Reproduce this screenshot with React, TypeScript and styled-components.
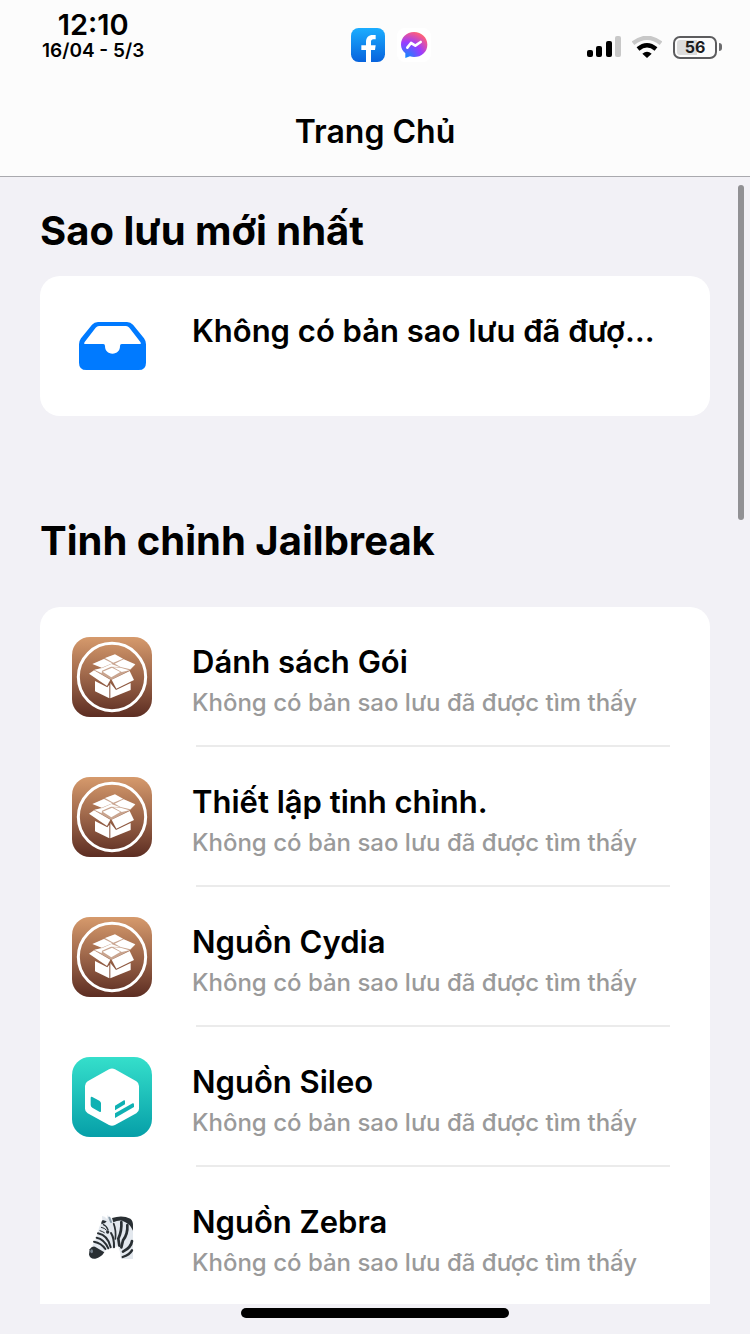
import React from "react";
import styled, { createGlobalStyle } from "styled-components";

const GlobalStyle = createGlobalStyle`
  *, *::before, *::after { box-sizing: border-box; }
  body {
    margin: 0;
    background: #f2f1f6;
    color: #000;
    font-family: Inter, "Liberation Sans", sans-serif;
  }
  h1, h2, h3, p, ul { margin: 0; padding: 0; }
`;

const Screen = styled.div`
  display: flex;
  flex-direction: column;
  height: 100vh;
  overflow: hidden;
`;

const Header = styled.header`
  flex: none;
  background: #fcfcfc;
  border-bottom: 1px solid #a9a9ae;
`;

const StatusBar = styled.div`
  display: grid;
  grid-template-columns: 1fr auto 1fr;
  align-items: center;
  height: 88px;
  padding: 0 28px 16px 42px;
`;

const Clock = styled.div`
  justify-self: start;
  display: flex;
  flex-direction: column;
  align-items: center;
`;

const Time = styled.time`
  font-size: 29px;
  line-height: 30px;
  font-weight: 600;
`;

const DateLine = styled.span`
  font-size: 19px;
  line-height: 22px;
  font-weight: 600;
`;

const AppBadges = styled.div`
  display: flex;
  align-items: center;
  gap: 12px;
  padding: 18px 0 0 18px;
`;

const Indicators = styled.div`
  justify-self: end;
  display: flex;
  align-items: center;
  gap: 11px;
  padding-top: 22px;
`;

const BatteryBox = styled.div`
  display: flex;
  align-items: center;
  gap: 2px;
`;

const BatteryShell = styled.div`
  display: flex;
  width: 44px;
  height: 23px;
  padding: 2px;
  border: 2px solid #5c5c5e;
  border-radius: 7px;
`;

const BatteryLevel = styled.div<{ $level: number }>`
  flex: 1;
  border-radius: 3px;
  background: linear-gradient(to right, #dcdcdc ${(p) => p.$level}%, transparent ${(p) => p.$level}%);
  color: #1c1c1e;
  font-size: 16px;
  line-height: 15px;
  font-weight: 700;
  text-align: center;
`;

const BatteryCap = styled.div`
  width: 3px;
  height: 8px;
  border-radius: 0 4px 4px 0;
  background: #6c6c6e;
`;

const PageTitle = styled.h1`
  height: 88px;
  font-size: 32px;
  line-height: 88px;
  font-weight: 600;
  text-align: center;
`;

const Content = styled.main`
  position: relative;
  flex: 1;
  min-height: 0;
  overflow: hidden;
  padding: 24px 40px 0;
`;

const SectionTitle = styled.h2<{ $gap: number }>`
  font-size: 40px;
  line-height: 60px;
  font-weight: 700;
  margin-bottom: ${(p) => p.$gap}px;
`;

const Card = styled.ul<{ $open?: boolean }>`
  list-style: none;
  background: #fff;
  border-radius: ${(p) => (p.$open ? "20px 20px 0 0" : "20px")};
`;

const BackupCard = styled(Card)`
  margin-bottom: 95px;
`;

const Item = styled.li`
  display: flow-root;
  height: 140px;
  & + &::before {
    content: "";
    display: block;
    height: 2px;
    margin: -2px 40px 0 156px;
    background: #ebebeb;
  }
`;

const Row = styled.a`
  display: grid;
  grid-template-columns: 80px minmax(0, 1fr);
  column-gap: 40px;
  height: 140px;
  padding: 0 40px 0 32px;
  color: inherit;
  text-decoration: none;
`;

const IconSlot = styled.span`
  display: grid;
  place-items: center;
`;

const RowText = styled.div`
  padding-top: 35px;
`;

const RowTitle = styled.h3`
  overflow: hidden;
  text-overflow: ellipsis;
  white-space: nowrap;
  font-size: 31px;
  line-height: 40px;
  font-weight: 600;
`;

const RowDetail = styled.p`
  padding-top: 5px;
  color: #9a9a9a;
  font-size: 24px;
  line-height: 32px;
  font-weight: 500;
  white-space: nowrap;
`;

const ScrollThumb = styled.div`
  position: absolute;
  top: 8px;
  right: 6px;
  width: 6px;
  height: 335px;
  border-radius: 3px;
  background: #919194;
`;

const HomeArea = styled.footer`
  flex: none;
  height: 30px;
  padding-top: 4px;
`;

const HomeIndicator = styled.div`
  width: 268px;
  height: 10px;
  margin: 0 auto;
  border-radius: 5px;
  background: #000;
`;

const FacebookIcon = () => (
  <svg width="34" height="34" viewBox="0 0 102 102" aria-label="Facebook">
    <defs>
      <linearGradient id="fb" x1="0" y1="0" x2="0" y2="1">
        <stop offset="0" stopColor="#1badff" />
        <stop offset="1" stopColor="#0763dd" />
      </linearGradient>
    </defs>
    <rect width="102" height="102" rx="23" fill="url(#fb)" />
    <path d="M45 102V66H31V52H45V42C45 28 53 21 65 21H74V34H68C62 34 60 37 60 42V52H74L72 66H60V102Z" fill="#fff" />
  </svg>
);

const MessengerIcon = () => (
  <svg width="34" height="34" viewBox="0 0 102 102" aria-label="Messenger">
    <defs>
      <radialGradient id="ms" cx="0.2" cy="1" r="1.1">
        <stop offset="0" stopColor="#0a8dff" />
        <stop offset="0.55" stopColor="#9a3cff" />
        <stop offset="0.9" stopColor="#f2588f" />
        <stop offset="1" stopColor="#ff6a6a" />
      </radialGradient>
    </defs>
    <rect width="102" height="102" rx="23" fill="#fff" />
    <path d="M51 12C28 12 12 29 12 50C12 61 17 69 25 76V90L39 85C43 86 47 87 51 87C74 87 91 71 91 50C91 29 74 12 51 12Z" fill="url(#ms)" />
    <path d="M31 59L42 45L55 53L71 42" fill="none" stroke="#fff" strokeWidth="8" strokeLinecap="round" strokeLinejoin="round" />
  </svg>
);

const SignalIcon = () => (
  <svg width="34" height="22" viewBox="0 0 34 22" aria-label="Signal">
    <rect x="0" y="14" width="6" height="7" rx="2" />
    <rect x="9" y="10" width="6" height="11" rx="2" />
    <rect x="19" y="5" width="6" height="16" rx="2" />
    <rect x="28" y="0" width="6" height="21" rx="2" fill="#c8c8c8" />
  </svg>
);

const WifiIcon = () => (
  <svg width="30" height="22" viewBox="0 0 90 66" aria-label="Wi-Fi">
    <path d="M3 22Q45 -11 87 22" fill="none" stroke="#c8c8c8" strokeWidth="13" />
    <path d="M18 39Q45 16 72 39" fill="none" stroke="#000" strokeWidth="13" />
    <path d="M31 53Q45 41 59 53L45 66Z" />
  </svg>
);

const InboxIcon = () => (
  <svg width="67" height="48" viewBox="147 171 201 144" aria-hidden="true">
    <path
      fillRule="evenodd"
      fill="#007aff"
      d="M204 171H291Q302 171 309 179L342 220Q348 228 348 238V293Q348 315 326 315H169Q147 315 147 293V238Q147 228 153 220L186 179Q193 171 204 171ZM207 183Q201 183 197 188L164 231Q160 237 166 237H220Q225 237 225 243C225 257 234 266 247.500 266C261 266 270 257 270 243Q270 237 275 237H329Q335 237 331 231L298 188Q294 183 288 183Z"
    />
  </svg>
);

const CydiaIcon = ({ id }: { id: string }) => (
  <svg width="80" height="80" viewBox="30 30 240 240" aria-hidden="true">
    <defs>
      <linearGradient id={id} x1="0" y1="0" x2="0" y2="1">
        <stop offset="0" stopColor="#d69a6c" />
        <stop offset="0.5" stopColor="#9c6549" />
        <stop offset="1" stopColor="#5c2d22" />
      </linearGradient>
    </defs>
    <rect x="30" y="30" width="240" height="240" rx="54" fill={`url(#${id})`} />
    <circle cx="150" cy="150" r="101" fill="none" stroke="#fff" strokeWidth="9" />
    <path d="M95 110L128 94L158 83L219 114L204 130L148 158L97 130L120 122Z" fill="#c9a590" />
    <g fill="#fff">
      <path d="M129 93L159 82L183 95L154 107Z" />
      <path d="M91 111L126 96L151 109L119 122Z" />
      <path d="M158 110L185 97L220 112L205 127L176 120Z" />
      <path d="M97 128L121 123L148 111L173 120L147 119L120 131L119 139Z" />
      <path d="M122 134L150 122L175 135L148 151Z" />
      <path d="M154 121L176 122L202 130L179 135Z" />
      <path d="M81 140L96 130L145 158L135 177Z" />
      <path d="M149 158L203 132L216 159L163 185Z" />
      <path d="M99 162L136 181L142 173V214L99 193Z" />
      <path d="M145 168L162 189L206 168V189L145 214Z" />
    </g>
  </svg>
);

const SileoIcon = () => (
  <svg width="80" height="80" viewBox="30 30 240 240" aria-hidden="true">
    <defs>
      <linearGradient id="sileo" x1="0" y1="0" x2="0" y2="1">
        <stop offset="0" stopColor="#35dfcb" />
        <stop offset="1" stopColor="#069fa8" />
      </linearGradient>
    </defs>
    <rect x="30" y="30" width="240" height="240" rx="54" fill="url(#sileo)" />
    <path d="M141 67Q150 62 159 67L223 103Q231 108 231 117V185Q231 194 223 199L159 234Q150 239 141 234L77 199Q69 194 69 185V117Q69 108 77 103Z" fill="#fff" />
    <g fill="#0fb1b3">
      <path d="M86 153Q86 148 91 150L112 161Q117 164 117 169V192Q117 197 112 194L91 182Q86 179 86 174Z" />
      <path d="M159 176L186 160Q189 159 189 163V172L159 190Z" />
      <path d="M159 199L212 169Q216 168 216 173V180L159 213Z" />
    </g>
  </svg>
);

const ZebraIcon = () => (
  <svg width="80" height="80" viewBox="0 0 240 240" aria-hidden="true">
    <path d="M91 71L90 57L98 59L106 67L106 54L118 64L124 71L145 66Q168 65 183 84V186H147Q146 164 138 148L124 154L112 154L102 160L80 180L61 185Q49 178 51 164L62 145L74 120L82 89Z" fill="#e3e8ee" />
    <g fill="#292f33">
      <path d="M53 157Q59 147 69 149L97 166Q88 181 70 185Q55 187 51 173Z" />
      <path d="M120 63Q151 53 175 65Q184 71 183 89V101Q174 79 151 71Q137 69 124 76Z" />
      <path d="M92 69L104 73L99 78L88 82Q86 75 92 69Z" />
    </g>
    <path d="M112 62L117 75" stroke="#8899a6" strokeWidth="6" strokeLinecap="round" />
    <g fill="none" stroke="#292f33" strokeWidth="6" strokeLinecap="round">
      <path d="M74 122Q96 126 109 154" />
      <path d="M66 134Q88 138 100 156" />
      <path d="M78 109Q108 115 116 151" />
      <path d="M84 101Q91 103 97 107" strokeWidth="3" />
      <path d="M88 91Q98 93 103 99" strokeWidth="3" />
      <path d="M94 83Q103 86 108 98" strokeWidth="4" />
      <path d="M117 108Q127 124 126 151" />
      <path d="M125 80Q133 101 130 126" strokeWidth="5" />
      <path d="M148 75Q150 101 139 125L142 146" strokeWidth="8" />
      <path d="M166 84Q168 111 153 130L148 151" strokeWidth="8" />
      <path d="M180 132Q178 151 153 164" strokeWidth="8" />
      <path d="M180 160Q173 173 152 180" strokeWidth="7" />
    </g>
    <circle cx="107" cy="105" r="5" fill="#292f33" />
    <ellipse cx="59" cy="163" rx="4" ry="6" fill="#77838f" />
  </svg>
);

const NOT_FOUND = "Không có bản sao lưu đã được tìm thấy";

const tweaks = [
  { title: "Dánh sách Gói", icon: <CydiaIcon id="cydia-list" /> },
  { title: "Thiết lập tinh chỉnh.", icon: <CydiaIcon id="cydia-setup" /> },
  { title: "Nguồn Cydia", icon: <CydiaIcon id="cydia-source" /> },
  { title: "Nguồn Sileo", icon: <SileoIcon /> },
  { title: "Nguồn Zebra", icon: <ZebraIcon /> },
];

interface ListRowProps {
  icon: React.ReactNode;
  title: string;
  detail?: string;
}

const ListRow = ({ icon, title, detail }: ListRowProps) => (
  <Item>
    <Row href="#">
      <IconSlot>{icon}</IconSlot>
      <RowText>
        <RowTitle>{title}</RowTitle>
        {detail && <RowDetail>{detail}</RowDetail>}
      </RowText>
    </Row>
  </Item>
);

export default function App() {
  return (
    <Screen>
      <GlobalStyle />
      <Header>
        <StatusBar>
          <Clock>
            <Time>12:10</Time>
            <DateLine>16/04 - 5/3</DateLine>
          </Clock>
          <AppBadges>
            <FacebookIcon />
            <MessengerIcon />
          </AppBadges>
          <Indicators>
            <SignalIcon />
            <WifiIcon />
            <BatteryBox>
              <BatteryShell>
                <BatteryLevel $level={56}>56</BatteryLevel>
              </BatteryShell>
              <BatteryCap />
            </BatteryBox>
          </Indicators>
        </StatusBar>
        <PageTitle>Trang Chủ</PageTitle>
      </Header>
      <Content>
        <SectionTitle $gap={15}>Sao lưu mới nhất</SectionTitle>
        <BackupCard>
          <ListRow icon={<InboxIcon />} title={NOT_FOUND} />
        </BackupCard>
        <SectionTitle $gap={36}>Tinh chỉnh Jailbreak</SectionTitle>
        <Card $open>
          {tweaks.map((t) => (
            <ListRow key={t.title} icon={t.icon} title={t.title} detail={NOT_FOUND} />
          ))}
        </Card>
        <ScrollThumb />
      </Content>
      <HomeArea>
        <HomeIndicator />
      </HomeArea>
    </Screen>
  );
}
